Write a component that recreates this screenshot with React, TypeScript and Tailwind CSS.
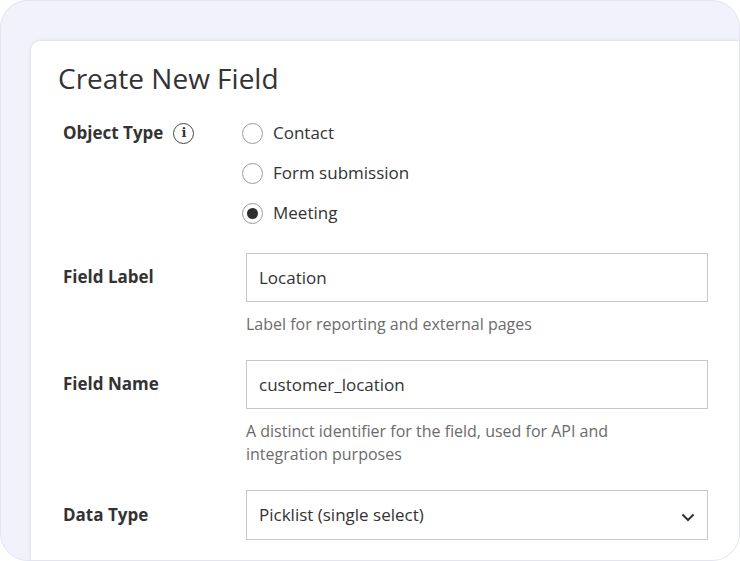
import React from "react";

const Radio = ({ checked, label }: { checked?: boolean; label: string }) => (
  <div className="flex items-center h-[40px]">
    <div className="w-[21px] h-[21px] rounded-full border border-[#9a9a9a] flex items-center justify-center bg-white">
      {checked && <div className="w-[11px] h-[11px] rounded-full bg-[#2e2e2e]" />}
    </div>
    <span className="ml-[10px] text-[17px] text-[#333]">{label}</span>
  </div>
);

export default function App() {
  return (
    <div className="w-[740px] h-[561px] bg-white" style={{ fontFamily: '"Open Sans", sans-serif' }}>
      <div className="w-[740px] h-[561px] rounded-[28px] border border-[#e2e4f0] bg-[#f1f2fb] overflow-hidden pl-[29px] pt-[39px]">
        <div className="bg-white rounded-tl-[10px] h-full border-l border-t border-[#e4e5ee] shadow-[0_0_3px_rgba(0,0,0,0.06)] pl-[27px] pr-[31px]">
          <h1 className="text-[28px] text-[#333] pt-[18px] leading-[38px]">Create New Field</h1>
          <div className="flex mt-[16px]">
            <div className="w-[184px] pl-[5px] h-[40px] flex items-center">
              <span className="text-[17px] font-bold text-[#333]">Object Type</span>
              <div className="ml-[10px] w-[21px] h-[21px] rounded-full border border-[#444] flex items-center justify-center text-[13px] font-bold text-[#333]" style={{ fontFamily: '"DejaVu Serif", serif' }}>i</div>
            </div>
            <div>
              <Radio label="Contact" />
              <Radio label="Form submission" />
              <Radio label="Meeting" checked />
            </div>
          </div>
          <div className="flex mt-[20px]">
            <div className="w-[188px] pl-[5px] h-[48px] flex items-center text-[17px] font-bold text-[#333]">Field Label</div>
            <div className="flex-1">
              <div className="h-[49px] border border-[#c8c8c8] flex items-center px-[12px] text-[17px] text-[#333]">Location</div>
              <div className="mt-[11px] text-[16px] text-[#6b6b6b] leading-[23px]">Label for reporting and external pages</div>
            </div>
          </div>
          <div className="flex mt-[24px]">
            <div className="w-[188px] pl-[5px] h-[48px] flex items-center text-[17px] font-bold text-[#333]">Field Name</div>
            <div className="flex-1">
              <div className="h-[49px] border border-[#c8c8c8] flex items-center px-[12px] text-[17px] text-[#333]">customer_location</div>
              <div className="mt-[11px] text-[16px] text-[#6b6b6b] leading-[23px] pr-[40px]">A distinct identifier for the field, used for API and integration purposes</div>
            </div>
          </div>
          <div className="flex mt-[24px]">
            <div className="w-[188px] pl-[5px] h-[50px] flex items-center text-[17px] font-bold text-[#333]">Data Type</div>
            <div className="flex-1 h-[50px] border border-[#c8c8c8] flex items-center justify-between pl-[12px] pr-[12px] text-[17px] text-[#333]">
              <span>Picklist (single select)</span>
              <svg width="14" height="9" viewBox="0 0 14 9" className="mt-[4px]"><path d="M1.5 1.5 L7 7 L12.5 1.5" fill="none" stroke="#333" strokeWidth="2" /></svg>
            </div>
          </div>
        </div>
      </div>
    </div>
  );
}
